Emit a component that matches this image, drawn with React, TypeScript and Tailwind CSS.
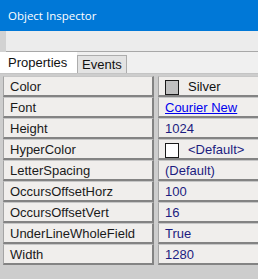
import React from "react";

type Row = { label: string; value: React.ReactNode };

const Swatch = ({ fill }: { fill: string }) => (
  <span
    className="inline-block w-[14px] h-[15px] border border-[#1a1a1a] mr-[9px] mt-[1px]"
    style={{ backgroundColor: fill }}
  />
);

const rows: Row[] = [
  {
    label: "Color",
    value: (
      <span className="flex items-center text-[#111]">
        <Swatch fill="#c0c0c0" />
        Silver
      </span>
    ),
  },
  {
    label: "Font",
    value: <span className="text-[#0000ee] underline">Courier New</span>,
  },
  { label: "Height", value: <span className="text-[#1c1c80]">1024</span> },
  {
    label: "HyperColor",
    value: (
      <span className="flex items-center text-[#1c1c80]">
        <Swatch fill="#ffffff" />
        &lt;Default&gt;
      </span>
    ),
  },
  { label: "LetterSpacing", value: <span className="text-[#1c1c80]">(Default)</span> },
  { label: "OccursOffsetHorz", value: <span className="text-[#1c1c80]">100</span> },
  { label: "OccursOffsetVert", value: <span className="text-[#1c1c80]">16</span> },
  { label: "UnderLineWholeField", value: <span className="text-[#1c1c80]">True</span> },
  { label: "Width", value: <span className="text-[#1c1c80]">1280</span> },
];

export default function App() {
  return (
    <div
      className="w-[258px] h-[279px] overflow-hidden bg-[#cdcdcd] flex flex-col"
      style={{ fontFamily: '"Liberation Sans", Arial, sans-serif' }}
    >
      <div
        className="h-[31px] shrink-0 bg-[#0078d7] text-white text-[11.5px] pl-[8px] flex items-center pt-[1px]"
        style={{ fontFamily: '"Open Sans", "Noto Sans", sans-serif' }}
      >
        Object Inspector
      </div>
      <div className="h-[21px] shrink-0 flex">
        <div className="w-[6px] bg-[#d2d2d2]" />
        <div className="flex-1 bg-[#ececec] border-b border-[#a8a8a8]" />
      </div>
      <div className="h-[22px] shrink-0 flex items-end bg-[#f0f0f0] border-b border-[#c4c4c4]">
        <div className="w-[77px] h-[21px] bg-white text-[13px] text-[#111] pl-[8px] leading-[22px]">
          Properties
        </div>
        <div className="w-[50px] h-[18px] bg-[#e3e3e3] border border-b-0 border-[#adadad] text-[13px] text-[#111] pl-[4px] leading-[18px]">
          Events
        </div>
      </div>
      <div className="flex flex-col pt-[2px]">
        {rows.map((r) => (
          <div key={r.label} className="h-[21px] flex text-[13px] leading-[18px]">
            <div className="ml-[3px] w-[151px] bg-[#f0eeec] border-t border-l border-t-[#c6c6c6] border-l-[#a4a4a4] border-b-2 border-r-2 border-b-[#838383] border-r-[#838383] pl-[6px] pt-[1px] text-[#1a1a1a] whitespace-nowrap">
              {r.label}
            </div>
            <div className="ml-[4px] flex-1 bg-[#f0eeec] border-t border-l border-t-[#c6c6c6] border-l-[#a4a4a4] border-b-2 border-b-[#838383] pl-[6px] pt-[1px] whitespace-nowrap">
              {r.value}
            </div>
          </div>
        ))}
      </div>
    </div>
  );
}
